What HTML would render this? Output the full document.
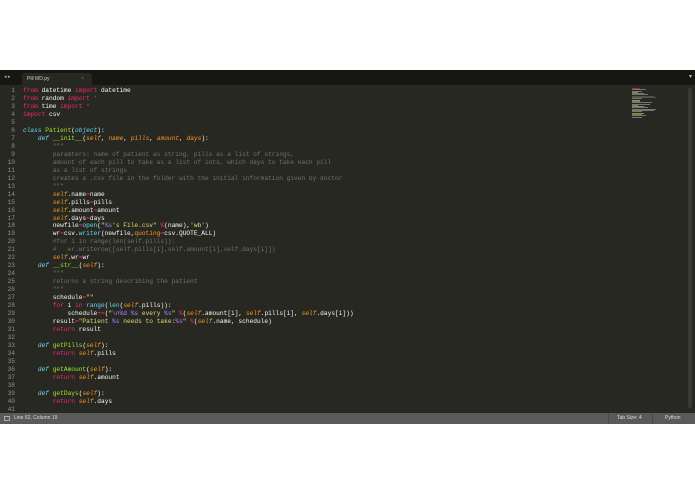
<!DOCTYPE html>
<html><head><meta charset="utf-8"><style>
*{margin:0;padding:0;box-sizing:border-box}
html,body{width:695px;height:494px;background:#fff;overflow:hidden;position:relative;font-family:"Liberation Sans",sans-serif}
#win{position:absolute;left:0;top:70px;width:695px;height:354px;background:#272822}
#tabs{position:absolute;left:0;top:0;width:695px;height:15px;background:#161613}
#tab{position:absolute;left:22px;top:3px;width:70px;height:12px;background:#272822;border-radius:3px 3px 0 0;color:#ccc;font-size:5px;line-height:12px;padding-left:5px}
#tab span{position:absolute;right:8px;color:#777}
#arrows{position:absolute;left:4px;top:3px;color:#aaa;font-size:5px;line-height:8px}
#code{position:absolute;left:0;top:17px;font-family:"Liberation Mono",monospace;font-size:6.2px;line-height:7.97px;color:#f8f8f2;white-space:pre}
.ln{display:inline-block;width:15px;text-align:right;color:#8f908a;margin-right:8px}
.k{color:#f92672}.c{color:#75715e}.g{color:#a6e22e}.b{color:#66d9ef;font-style:italic}.o{color:#fd971f;font-style:italic}.s{color:#e6db74}.p{color:#ae81ff}
#status{position:absolute;left:0;top:343px;width:695px;height:11px;background:#5a5a5a;color:#ddd;font-size:5px;line-height:11px}
#scroll{position:absolute;left:688px;top:18px;width:4px;height:320px;background:#3a3a35;border-radius:2px}
#mini{position:absolute;left:632px;top:18px;width:30px;height:55px;opacity:.6}
#mini div{height:1px;margin-bottom:.3px;background:#aaa}
</style></head><body>
<div id="win">
<div id="tabs"><div id="arrows">◂ ▸</div><div id="tab">Pill MD.py<span>×</span></div><div style="position:absolute;right:3px;top:3px;color:#bbb;font-size:6px">▾</div></div>
<div id="code"><span class="ln">1</span><span class="k">from</span> datetime <span class="k">import</span> datetime
<span class="ln">2</span><span class="k">from</span> random <span class="k">import</span> <span class="k">*</span>
<span class="ln">3</span><span class="k">from</span> time <span class="k">import</span> <span class="k">*</span>
<span class="ln">4</span><span class="k">import</span> csv
<span class="ln">5</span>
<span class="ln">6</span><span class="b">class</span> <span class="g">Patient</span>(<span class="b">object</span>):
<span class="ln">7</span>    <span class="b">def</span> <span class="g">__init__</span>(<span class="o">self</span>, <span class="o">name</span>, <span class="o">pills</span>, <span class="o">amount</span>, <span class="o">days</span>):
<span class="ln">8</span>        <span class="c">"""</span>
<span class="ln">9</span><span class="c">        paramters: name of patient as string, pills as a list of strings,</span>
<span class="ln">10</span><span class="c">        amount of each pill to take as a list of ints, which days to take each pill</span>
<span class="ln">11</span><span class="c">        as a list of strings</span>
<span class="ln">12</span><span class="c">        creates a .csv file in the folder with the initial information given by doctor</span>
<span class="ln">13</span><span class="c">        """</span>
<span class="ln">14</span>        <span class="o">self</span>.name<span class="k">=</span>name
<span class="ln">15</span>        <span class="o">self</span>.pills<span class="k">=</span>pills
<span class="ln">16</span>        <span class="o">self</span>.amount<span class="k">=</span>amount
<span class="ln">17</span>        <span class="o">self</span>.days<span class="k">=</span>days
<span class="ln">18</span>        newfile<span class="k">=</span><span class="b" style="font-style:normal">open</span>(<span class="s">"<span class="p">%s</span>'s File.csv"</span> <span class="k">%</span>(name),<span class="s">'wb'</span>)
<span class="ln">19</span>        wr<span class="k">=</span>csv.<span class="b" style="font-style:normal">writer</span>(newfile,<span class="o" style="font-style:normal">quoting</span><span class="k">=</span>csv.QUOTE_ALL)
<span class="ln">20</span><span class="c">        #for i in range(len(self.pills)):</span>
<span class="ln">21</span><span class="c">        #   wr.writerow([self.pills[i],self.amount[i],self.days[i]])</span>
<span class="ln">22</span>        <span class="o">self</span>.wr<span class="k">=</span>wr
<span class="ln">23</span>    <span class="b">def</span> <span class="g">__str__</span>(<span class="o">self</span>):
<span class="ln">24</span>        <span class="c">"""</span>
<span class="ln">25</span><span class="c">        returns a string describing the patient</span>
<span class="ln">26</span><span class="c">        """</span>
<span class="ln">27</span>        schedule<span class="k">=</span><span class="s">""</span>
<span class="ln">28</span>        <span class="k">for</span> i <span class="k">in</span> <span class="b" style="font-style:normal">range</span>(<span class="b" style="font-style:normal">len</span>(<span class="o">self</span>.pills)):
<span class="ln">29</span>            schedule<span class="k">+=</span>(<span class="s">"<span class="p">\n%d</span> <span class="p">%s</span> every <span class="p">%s</span>"</span> <span class="k">%</span>(<span class="o">self</span>.amount[i], <span class="o">self</span>.pills[i], <span class="o">self</span>.days[i]))
<span class="ln">30</span>        result<span class="k">=</span><span class="s">"Patient <span class="p">%s</span> needs to take:<span class="p">%s</span>"</span> <span class="k">%</span>(<span class="o">self</span>.name, schedule)
<span class="ln">31</span>        <span class="k">return</span> result
<span class="ln">32</span>
<span class="ln">33</span>    <span class="b">def</span> <span class="g">getPills</span>(<span class="o">self</span>):
<span class="ln">34</span>        <span class="k">return</span> <span class="o">self</span>.pills
<span class="ln">35</span>
<span class="ln">36</span>    <span class="b">def</span> <span class="g">getAmount</span>(<span class="o">self</span>):
<span class="ln">37</span>        <span class="k">return</span> <span class="o">self</span>.amount
<span class="ln">38</span>
<span class="ln">39</span>    <span class="b">def</span> <span class="g">getDays</span>(<span class="o">self</span>):
<span class="ln">40</span>        <span class="k">return</span> <span class="o">self</span>.days
<span class="ln">41</span></div>
<div id="mini"><div style="width:8px;background:#f92672"></div><div style="width:14px"></div><div style="width:10px"></div><div style="width:6px;background:#a6e22e"></div><div style="width:12px"></div><div style="width:16px"></div><div style="width:22px;background:#75715e"></div><div style="width:24px;background:#75715e"></div><div style="width:10px"></div><div style="width:8px;background:#e6db74"></div><div style="width:8px"></div><div style="width:20px"></div><div style="width:18px"></div><div style="width:6px"></div><div style="width:12px;background:#a6e22e"></div><div style="width:16px"></div><div style="width:24px"></div><div style="width:22px"></div><div style="width:10px"></div><div style="width:12px;background:#a6e22e"></div><div style="width:10px"></div><div style="width:14px"></div><div style="width:10px"></div></div>
<div id="scroll"></div>
<div id="status"><span style="position:absolute;left:4px;top:3px;width:6px;height:5px;border:1px solid #aaa"></span><span style="position:absolute;left:14px">Line 62, Column 19</span><span style="position:absolute;left:608px;border-left:1px solid #4a4a4a;padding-left:8px">Tab Size: 4</span><span style="position:absolute;left:652px;border-left:1px solid #4a4a4a;padding-left:12px">Python</span></div>
</div>
</body></html>
